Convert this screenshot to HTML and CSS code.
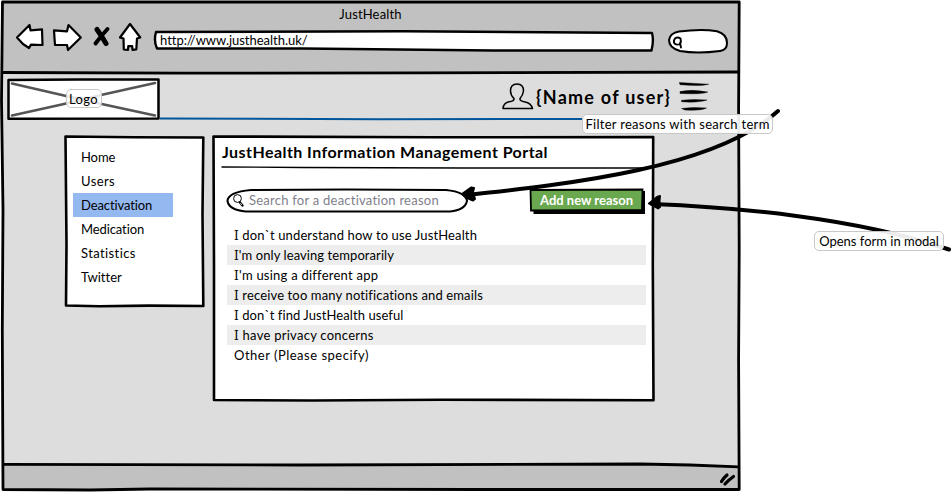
FILE: index.html
```html
<!DOCTYPE html>
<html lang="en">
<head>
<meta charset="utf-8">
<title>JustHealth</title>
<link rel="stylesheet" href="styles.css">
</head>
<body>
<div class="stage">
  <div class="window">
    <svg class="sketch" width="742" height="492" viewBox="0 0 742 492">
      <path fill="#ddd" d="M2 2H739V489H3Z"/>
      <path fill="#c1c1c1" d="M2 2L739 2V72L400 73L2 72Z"/>
      <path fill="#c1c1c1" d="M3 464.500L600 464L739 467V489L3 489Z"/>
      <g class="ink" stroke-width="2.800">
        <path d="M2.500 2L300 2L739.200 2L738.600 110L739.200 250L738.600 360L739.200 489.500L480 489.500L150 489L90 490L3 489.500L2.300 330L3 210L1.500 100Z"/>
        <path d="M2 72.500L180 73.200L420 72.800L738 72"/>
        <path d="M3 464.400L300 465L640 464L690 465L739 466.800"/>
      </g>
    </svg>

    <div class="toolbar">
      <div class="title"><span class="t-title">JustHealth</span></div>
      <div class="controls">
        <svg class="nav" width="130" height="34" viewBox="0 0 130 34">
          <g fill="#fff" stroke="#000" stroke-width="2.200" stroke-linejoin="round">
            <path d="M3 15.500L15.500 3L16.500 8.300L28 7.300L28.500 23L17 22.600L15 26L9 22Z"/>
            <path d="M40 8.300L53 9.300L54.500 3L66.800 15.500L54 28L53 23L41 23L40.500 16Z"/>
            <path d="M116 2L106 15.500L109.500 16.500L109.800 27.500L114 27.800L114.300 24.200L118.200 24.200L118.500 28L122.300 27.300L123 16.500L126.300 15.500Z"/>
          </g>
          <g stroke="#000" fill="none" stroke-linecap="round">
            <path stroke-width="5" d="M83 7.500Q87 13 92 21.500"/>
            <path stroke-width="4" d="M93.500 7Q87 14 81.500 21.500"/>
          </g>
        </svg>
        <div class="url">
          <svg class="sketch" width="502" height="24" viewBox="0 0 502 24">
            <path fill="#fff" class="ink" stroke-width="2.400" d="M3 3L250 2.300L499 4Q501 11 498.500 21.500L340 21.500L150 19.500L4 19.500Q.5 12 3 3Z"/>
          </svg>
          <span class="t-url">http://www.justhealth.uk/</span>
        </div>
        <svg class="quick" width="62" height="26" viewBox="0 0 62 26">
          <path fill="#fff" class="ink" stroke-width="2" d="M12 3.500Q34 .6 50 3.200Q60 6 60 15Q60 22 53 23Q30 26 13 23Q2 20 2 12Q3 5 12 3.500Z"/>
          <path fill="none" stroke="#000" stroke-width="1.900" stroke-linecap="round" d="M8 10.500Q10.500 8.500 13.500 10.500Q14.500 13.500 13 16Q10 17.500 7.500 15.500Q6 13 8 10.500ZM13 15L14 19.500"/>
        </svg>
      </div>
    </div>

    <div class="header">
      <div class="logo">
        <svg class="sketch" width="153" height="42" viewBox="0 0 153 42">
          <path fill="#fff" class="ink" stroke-width="2.500" d="M1.500 2L70 1.500L151.500 1.500V40.500L1.500 40.700Z"/>
          <path fill="none" stroke="#555" stroke-width="2.600" stroke-linecap="round" d="M5 5.500L57 17.500L90 25L148 37.500M5 37.500L57 26L94 17L148 5"/>
        </svg>
        <span class="tag logo-tag"><span class="t-logo">Logo</span></span>
      </div>
      <svg class="rule" width="425" height="5" viewBox="0 0 425 5"><path fill="none" stroke="#00569b" stroke-width="2" d="M0 1.500L220 2.300L424 2"/></svg>
      <div class="user">
        <svg width="32" height="27" viewBox="0 0 32 27">
          <path fill="#ddd" stroke="#000" stroke-width="1.500" stroke-linejoin="round" d="M1 25.500Q1.500 20 7 18.800Q12.500 18 12 15.500Q8.500 12 8.500 8Q8.500 1 15 1Q21.500 1 21.500 8Q21 12 18 15.500Q17.500 18 23 19Q29 20 30.500 25.500Z"/>
        </svg>
        <span class="t-user">{Name of user}</span>
        <svg class="burger" width="30" height="29" viewBox="0 0 30 29">
          <path stroke="#000" stroke-width=".4" d="M.3.500L29.800 2.200Q22 4.500 1 2.700ZM1 9.500Q14 7 28.800 10Q24 12.600 1 11.500ZM2.500 18.300Q14 16.800 28 18Q19 21 2.500 19.800ZM2.500 26.500Q14 24.700 27.500 26Q22 29 6 28Z"/>
        </svg>
      </div>
    </div>

    <div class="main">
      <div class="menu">
        <svg class="sketch" width="141" height="173" viewBox="0 0 141 173">
          <path fill="#fff" class="ink" stroke-width="2.600" d="M1.500 1.500L70 2.300L139.300 2.500L138.500 80L139.300 171L85 170.600L35 171.200L2 170.500L2.500 110Z"/>
        </svg>
        <div class="item"><span class="m1">Home</span></div>
        <div class="item"><span class="m2">Users</span></div>
        <div class="item active"><span class="m3">Deactivation</span></div>
        <div class="item"><span class="m4">Medication</span></div>
        <div class="item"><span class="m5">Statistics</span></div>
        <div class="item"><span class="m6">Twitter</span></div>
      </div>

      <div class="panel">
        <svg class="sketch" width="444" height="267" viewBox="0 0 444 267">
          <path fill="#fff" class="ink" stroke-width="2.600" d="M1.500 1.500L220 2.300L441.200 2L440.800 130L441.500 265.200L230 264.700L100 265.500L2 265L2 130Z"/>
          <path fill="none" stroke="#000" stroke-width="1.300" d="M9.500 32L90 32.500L250 33L434 33"/>
        </svg>
        <h1><span class="t-head">JustHealth Information Management Portal</span></h1>
        <div class="actions">
          <div class="search">
            <svg class="sketch" width="243" height="25" viewBox="0 0 243 25">
              <path fill="#fff" class="ink" stroke-width="2" d="M25 2L120 1.500L220 2Q240 4 241 13Q239 22 224 23.500L20 23.500Q3 22 1.500 13Q2 4 25 2Z"/>
              <g fill="none" stroke="#000"><circle cx="11.500" cy="10.500" r="3.900" stroke-width="1"/><path stroke-width="2.300" stroke-linecap="round" d="M14 14.500L16.500 17.500"/><path stroke="#fff" stroke-width=".8" d="M14.300 15L16 17"/></g>
            </svg>
            <span class="t-search">Search for a deactivation reason</span>
          </div>
          <div class="button">
            <svg class="sketch" width="117" height="27" viewBox="0 0 117 27">
              <path d="M4.500 3H116V26H4.500Z"/>
              <path fill="#6aa84f" stroke="#000" stroke-width="1.800" d="M1.500 2L113.500 1.500L113 22L2 22.500Z"/>
            </svg>
            <span class="t-button">Add new reason</span>
          </div>
        </div>
        <div class="list">
          <div class="row"><span class="l1"><i>I</i> don`t understand how to use JustHealth</span></div>
          <div class="row"><span class="l2"><i>I</i>'m only leaving temporarily</span></div>
          <div class="row"><span class="l3"><i>I</i>'m using a different app</span></div>
          <div class="row"><span class="l4"><i>I</i> receive too many notifications and emails</span></div>
          <div class="row"><span class="l5"><i>I</i> don`t find JustHealth useful</span></div>
          <div class="row"><span class="l6"><i>I</i> have privacy concerns</span></div>
          <div class="row"><span class="l7">Other (Please specify)</span></div>
        </div>
      </div>
    </div>
    <div class="status">
      <svg width="18" height="15" viewBox="0 0 18 15"><path fill="none" stroke="#000" stroke-width="3.200" stroke-linecap="round" d="M2.500 9.500Q4.500 6 8 3M6 12Q9.500 8 14.500 4.500"/></svg>
    </div>
  </div>

  <svg class="arrows" width="951" height="492" viewBox="0 0 951 492">
    <g fill="none" stroke="#000" stroke-width="4" stroke-linecap="round" stroke-linejoin="round">
      <path d="M466 195C570 184 715 168 778 111"/>
      <path d="M652 204C730 207 855 217 949 249.500"/>
    </g>
    <path stroke="#000" stroke-width="2" stroke-linejoin="round" d="M462 194L471 187.500L474 188L473 192L475 199L473 200.500L466 197.500ZM649 203.500L657 197L660 196L659.500 201L660 207L658 208.500Z"/>
  </svg>
  <div class="tag note note-filter"><span class="t-filter">Filter reasons with search term</span></div>
  <div class="tag note note-modal"><span class="t-modal">Opens form in modal</span></div>
</div>
</body>
</html>
```
FILE: styles.css
```css
body { margin: 0; background: #fff; color: #000; font: 13px/20px Lato, "Liberation Sans", sans-serif; font-variant-ligatures: none; overflow: hidden; }
svg { display: block; flex: none; }
span { white-space: nowrap; }
.stage { position: relative; width: 951px; height: 492px; overflow: hidden; }
.window { position: relative; isolation: isolate; width: 741px; height: 492px; display: flex; flex-direction: column; }
.sketch { position: absolute; left: 0; top: 0; z-index: -1; }
.ink { stroke: #000; stroke-linejoin: round; }
g.ink { fill: none; }

.toolbar { height: 73px; }
.title { height: 20px; padding-top: 4px; text-align: center; }
.controls { display: flex; padding-left: 14px; }
.nav { margin-top: -2px; }
.url { position: relative; isolation: isolate; width: 486px; height: 24px; margin: 5px 14px 0 9px; padding-left: 7px; line-height: 22px; }
.quick { margin-top: 4px; margin-left: 7px; }

.header { position: relative; height: 62px; display: flex; }
.logo { position: relative; isolation: isolate; width: 153px; height: 42px; margin: 5px 0 0 7px; display: flex; align-items: center; justify-content: center; }
.tag { box-sizing: border-box; display: flex; align-items: center; justify-content: center; border: 1px solid #c8c8c8; border-radius: 5px; background: rgba(255,255,255,.92); }
.logo-tag { width: 36px; height: 19px; margin: -1px 0 0 0; background: rgba(255,255,255,.85); }
.rule { margin-top: 44px; }
.user { display: flex; align-items: flex-start; margin-left: -83px; padding-top: 10px; }
.user span { width: 138px; margin-left: 2px; line-height: 28px; font-size: 18px; font-weight: 700; }
.burger { margin-left: 5px; margin-top: -1px; }

.main { display: flex; gap: 8px; padding-left: 64px; height: 330px; }
.menu { position: relative; isolation: isolate; box-sizing: border-box; width: 140px; height: 173px; padding: 10px 0 0 9px; }
.item { width: 92px; height: 24px; padding-left: 8px; line-height: 24px; }
.active { background: #94b8f0; }
.panel { position: relative; isolation: isolate; box-sizing: border-box; width: 444px; height: 267px; }
h1 { margin: 0; padding: 7px 0 0 10px; font-size: 16px; line-height: 20px; }
.actions { display: flex; justify-content: space-between; padding: 26px 10px 0 14px; height: 37px; }
.search { position: relative; isolation: isolate; width: 243px; height: 25px; padding: 2px 0 0 23px; box-sizing: border-box; color: #80808a; }
.button { position: relative; isolation: isolate; box-sizing: border-box; width: 117px; height: 27px; padding: 2px 0 0 11px; color: #fff; font-weight: 700; }
.list { margin: 0 10px 0 15px; }
.row { height: 20px; padding-left: 7px; }
.row:nth-child(even) { background: #ededed; }
.row i { font-family: "DejaVu Serif", serif; font-style: normal; font-size: 12px; }
.status { display: flex; justify-content: flex-end; padding: 7px 4px 0 0; }

/* Per-string tracking */
.t-title { letter-spacing: .15px; }
.t-url { letter-spacing: -.03px; }
.t-logo { letter-spacing: .3px; }
.user .t-user { letter-spacing: 1.25px; }
.t-head { letter-spacing: .44px; }
.t-search { letter-spacing: .24px; }
.t-filter { letter-spacing: .29px; }
.m1, .m3, .m4 { letter-spacing: -.1px; }
.m2 { letter-spacing: .4px; }
.m5 { letter-spacing: .4px; }
.l1 { letter-spacing: .13px; }
.l2 { letter-spacing: .08px; }
.l3 { letter-spacing: .24px; }
.l4 { letter-spacing: .14px; }
.l5 { letter-spacing: .08px; }
.l6 { letter-spacing: .26px; }
.l7 { letter-spacing: .5px; }

.arrows { position: absolute; left: 0; top: 0; }
.note { position: absolute; height: 20px; padding-bottom: 1px; }
.note-filter { left: 582px; top: 114px; width: 191px; }
.note-modal { left: 814px; top: 231px; width: 130px; }
```
